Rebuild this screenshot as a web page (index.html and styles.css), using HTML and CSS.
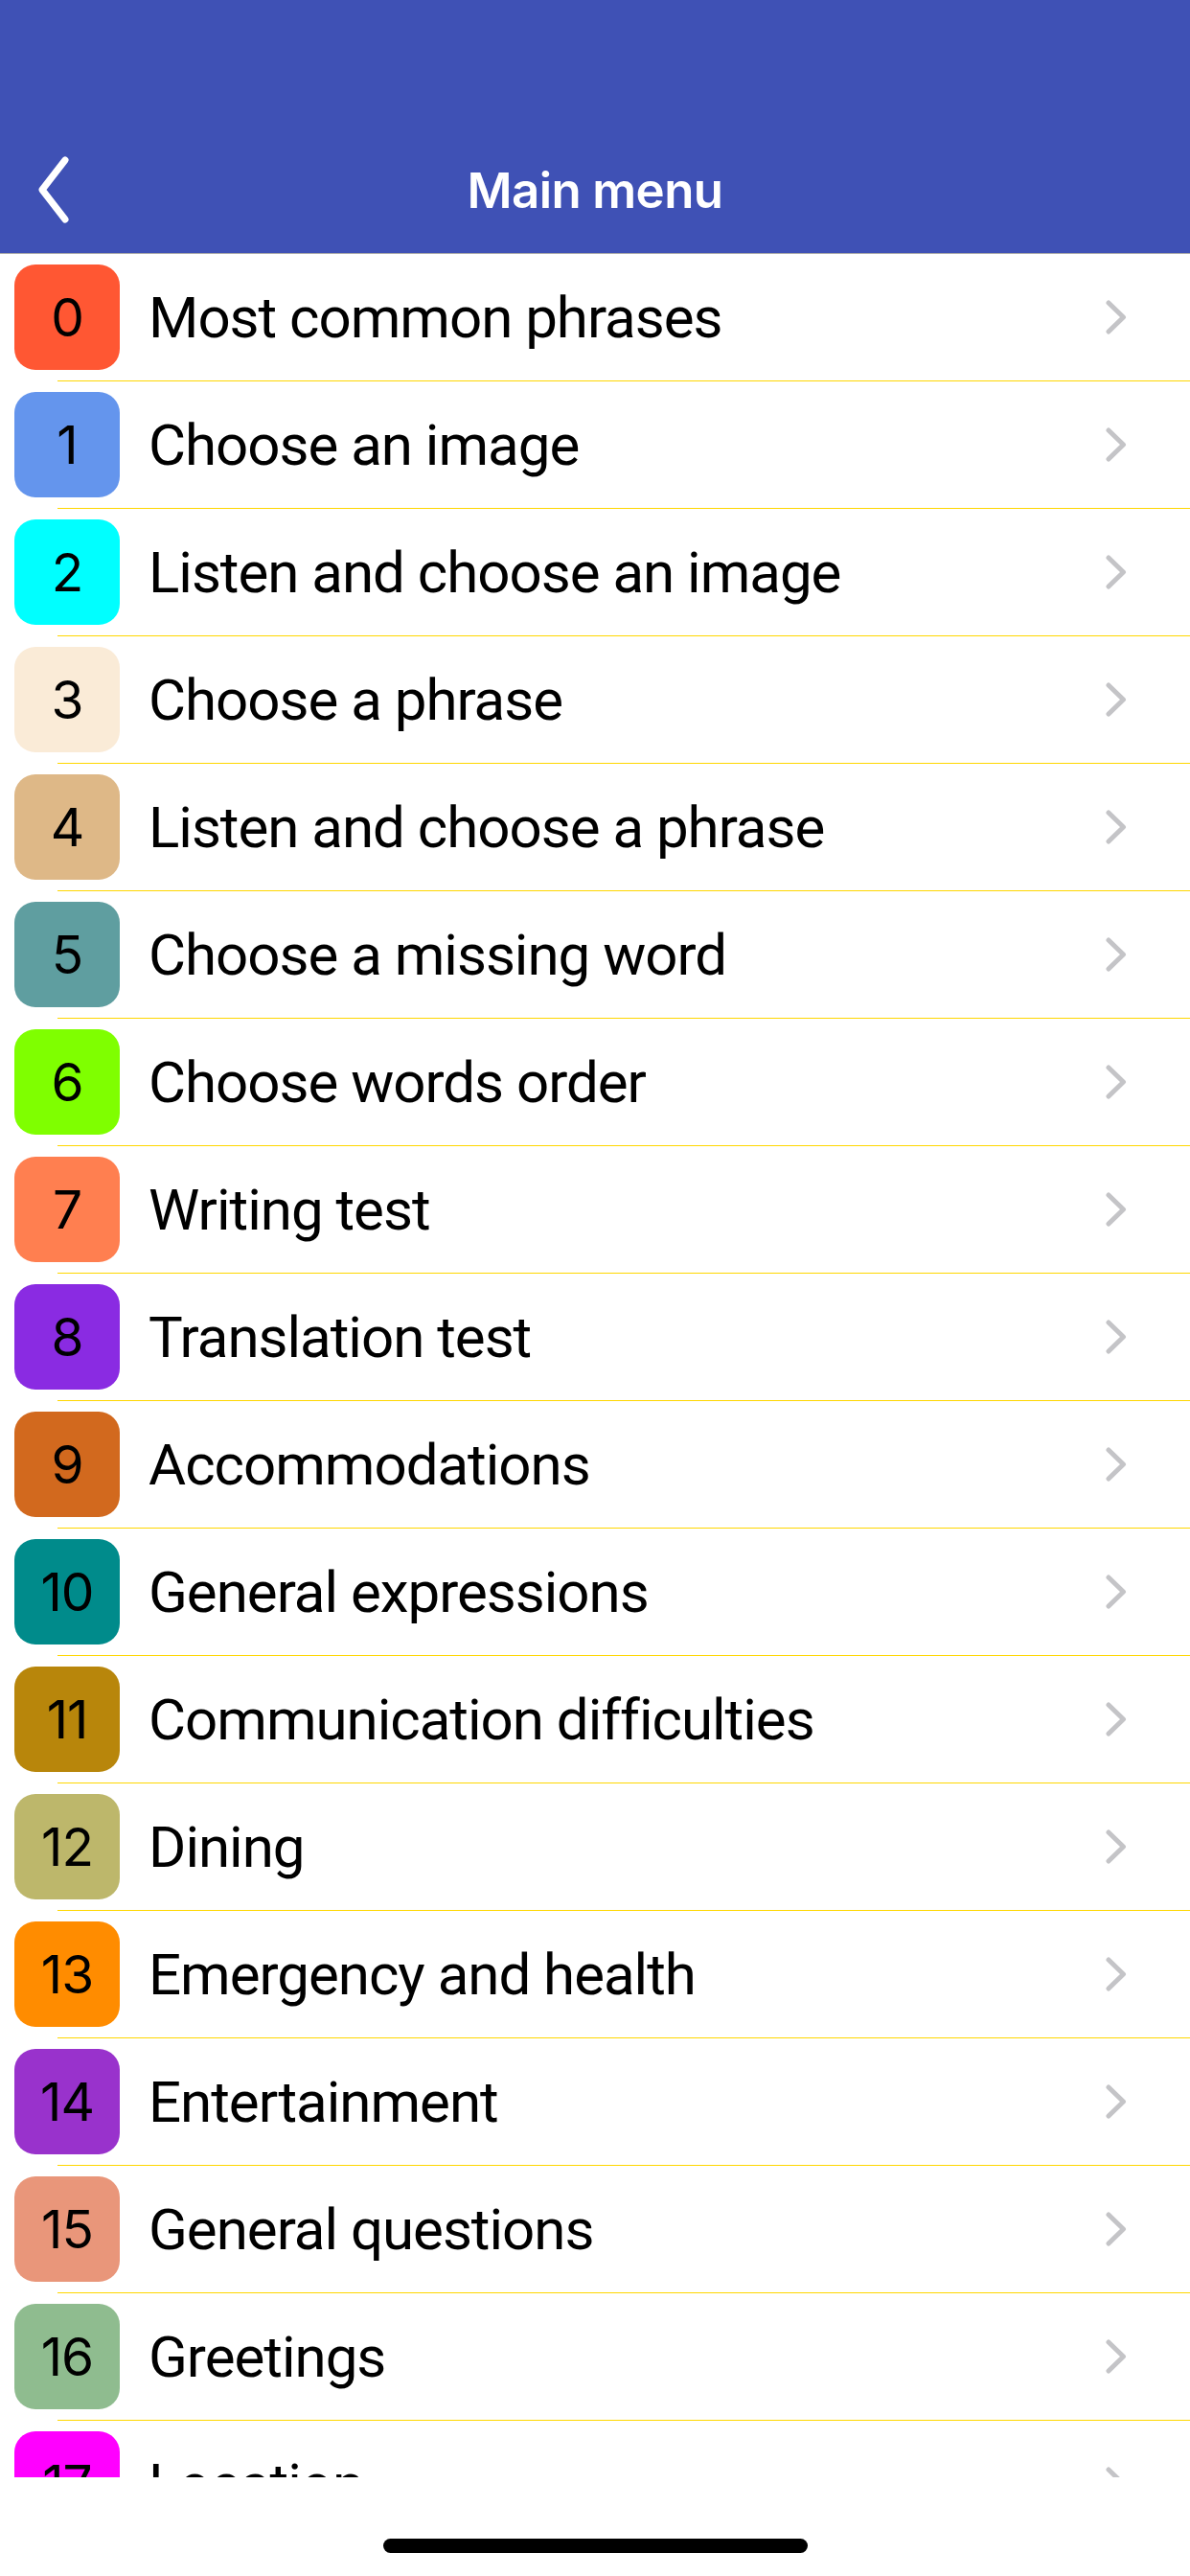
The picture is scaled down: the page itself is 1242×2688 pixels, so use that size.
FILE: index.html
```html
<!DOCTYPE html>
<html lang="en">
<head>
  <meta charset="UTF-8">
  <title>Main menu</title>
  <meta name="viewport" content="width=device-width, initial-scale=1">
  <link rel="stylesheet" href="styles.css">
</head>
<body>

<header class="topbar">
  <div class="navbar">
    <button class="back" aria-label="Back">
      <svg width="44" height="70" viewBox="0 0 44 70"><polyline points="36,4 12,35 36,66" fill="none" stroke="#fff" stroke-width="7" stroke-linecap="round" stroke-linejoin="round"/></svg>
    </button>
    <h1 class="title">Main menu</h1>
    <span class="spacer"></span>
  </div>
</header>

<main class="list">
  <a class="row"><span class="num c0">0</span><span class="label">Most common phrases</span><span class="chev"></span></a>
  <a class="row"><span class="num c1">1</span><span class="label">Choose an image</span><span class="chev"></span></a>
  <a class="row"><span class="num c2">2</span><span class="label">Listen and choose an image</span><span class="chev"></span></a>
  <a class="row"><span class="num c3">3</span><span class="label">Choose a phrase</span><span class="chev"></span></a>
  <a class="row"><span class="num c4">4</span><span class="label">Listen and choose a phrase</span><span class="chev"></span></a>
  <a class="row"><span class="num c5">5</span><span class="label">Choose a missing word</span><span class="chev"></span></a>
  <a class="row"><span class="num c6">6</span><span class="label">Choose words order</span><span class="chev"></span></a>
  <a class="row"><span class="num c7">7</span><span class="label">Writing test</span><span class="chev"></span></a>
  <a class="row"><span class="num c8">8</span><span class="label">Translation test</span><span class="chev"></span></a>
  <a class="row"><span class="num c9">9</span><span class="label">Accommodations</span><span class="chev"></span></a>
  <a class="row"><span class="num c10">10</span><span class="label">General expressions</span><span class="chev"></span></a>
  <a class="row"><span class="num c11">11</span><span class="label">Communication difficulties</span><span class="chev"></span></a>
  <a class="row"><span class="num c12">12</span><span class="label">Dining</span><span class="chev"></span></a>
  <a class="row"><span class="num c13">13</span><span class="label">Emergency and health</span><span class="chev"></span></a>
  <a class="row"><span class="num c14">14</span><span class="label">Entertainment</span><span class="chev"></span></a>
  <a class="row"><span class="num c15">15</span><span class="label">General questions</span><span class="chev"></span></a>
  <a class="row"><span class="num c16">16</span><span class="label">Greetings</span><span class="chev"></span></a>
  <a class="row"><span class="num c17">17</span><span class="label">Location</span><span class="chev"></span></a>
</main>

<footer class="home">
  <div class="indicator"></div>
</footer>

</body>
</html>
```

FILE: styles.css
```css
body { margin: 0; width: 1242px; height: 2688px; overflow: hidden; background: #fff; font-family: Inter, "Noto Sans", sans-serif; color: #000; }

.topbar { height: 264px; background: #3f51b5; border-bottom: 1px solid #a9a9a9; display: flex; flex-direction: column; justify-content: flex-end; }
.navbar { height: 132px; display: flex; align-items: center; }
.back { width: 124px; height: 132px; padding: 0 0 0 32px; background: none; border: none; display: flex; align-items: center; }
.title { flex: 1; margin: 0; text-align: center; color: #fff; font-size: 51px; font-weight: 600; letter-spacing: -0.6px; }
.spacer { width: 124px; }

.list { height: 2320px; overflow: hidden; }
.row { height: 133px; box-sizing: border-box; padding-bottom: 1px; display: flex; align-items: center;
  background: linear-gradient(#ffd700, #ffd700) no-repeat 60px 100% / calc(100% - 60px) 1px; }
.num { width: 110px; height: 110px; margin-left: 15px; border-radius: 22px; display: flex; align-items: center; justify-content: center; font-size: 55px; letter-spacing: -1px; }
.label { flex: 1; margin-left: 30px; font-family: Roboto, Inter, sans-serif; font-size: 60px; letter-spacing: -1px; }
.chev { width: 22px; height: 36px; margin-right: 66px;
  background: url("data:image/svg+xml,%3Csvg xmlns='http://www.w3.org/2000/svg' width='22' height='36' viewBox='0 0 22 36'%3E%3Cpolyline points='3,3 18.5,18 3,33' fill='none' stroke='%23c4c4c7' stroke-width='5' stroke-linecap='round' stroke-linejoin='round'/%3E%3C/svg%3E") no-repeat; }

.c0 { background: #ff5733; }
.c1 { background: #6495ed; }
.c2 { background: #00ffff; }
.c3 { background: #faebd7; }
.c4 { background: #deb887; }
.c5 { background: #5f9ea0; }
.c6 { background: #7fff00; }
.c7 { background: #ff7f50; }
.c8 { background: #8a2be2; }
.c9 { background: #d2691e; }
.c10 { background: #008b8b; }
.c11 { background: #b8860b; }
.c12 { background: #bdb76b; }
.c13 { background: #ff8c00; }
.c14 { background: #9932cc; }
.c15 { background: #e9967a; }
.c16 { background: #8fbc8f; }
.c17 { background: #ff00ff; }

.home { height: 103px; display: flex; justify-content: center; padding-top: 64px; box-sizing: border-box; }
.indicator { width: 443px; height: 15px; border-radius: 8px; background: #000; }
```
